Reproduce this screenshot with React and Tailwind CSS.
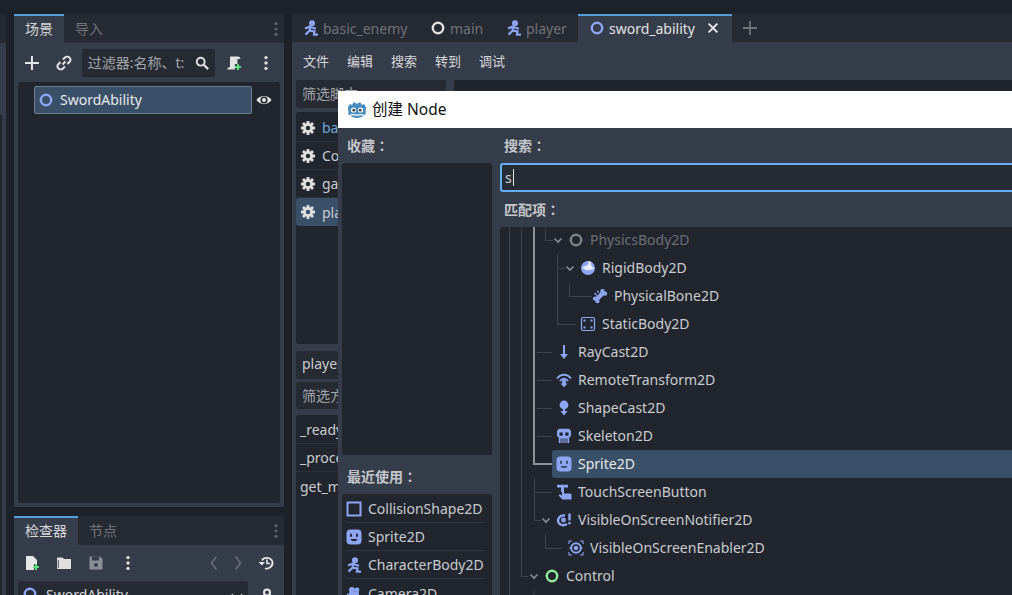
import React from "react";

const BLUE = "#8da5f3";
const Ico = ({ s = 16, className = "", children }) => (
  <svg width={s} height={s} viewBox="0 0 16 16" className={"shrink-0 " + className}>{children}</svg>
);
const Ring = ({ c = BLUE, s = 16 }) => (
  <Ico s={s}><circle cx="8" cy="8" r="5.2" fill="none" stroke={c} strokeWidth="2.4" /></Ico>
);
const Runner = ({ c = BLUE }) => (
  <Ico>
    <circle cx="9" cy="3.2" r="3" fill={c} />
    <path d="M2 8.5 7 6.4 6.6 10.6 2.5 14.6M6.8 10.6 11.5 11.4 11 14.6H15M7.2 7 13 8.8" fill="none" stroke={c} strokeWidth="2.2" />
  </Ico>
);
const Sprite = ({ cut = "#21262e" }) => (
  <Ico>
    <rect x="0.5" y="0.5" width="15" height="15" rx="4" fill={BLUE} />
    <rect x="4" y="4.5" width="2" height="3.5" rx="1" fill={cut} />
    <rect x="10" y="4.5" width="2" height="3.5" rx="1" fill={cut} />
    <path d="M4.5 10C5.5 13 10.5 13 11.5 10Z" fill={cut} />
  </Ico>
);
const Square = () => (
  <Ico><rect x="1.5" y="1.5" width="13" height="13" fill="none" stroke={BLUE} strokeWidth="2" /></Ico>
);
const Camera = () => (
  <Ico>
    <circle cx="6" cy="5" r="3" fill={BLUE} /><circle cx="11" cy="5" r="2.4" fill={BLUE} />
    <rect x="3" y="7" width="10" height="6" rx="1" fill={BLUE} /><path d="M1 8 3 9.5V11L1 12.5Z" fill={BLUE} />
  </Ico>
);
const Rigid = () => (
  <Ico>
    <circle cx="8" cy="8" r="7" fill={BLUE} />
    <path d="M7.5 1.2C9.5 2.5 8.8 4.5 6.8 5.5 5 6.5 3.5 6 1.3 8.5 3.5 8 5 8.5 5.5 10.5 7.5 9.5 11 10.5 14.9 8.5 12 7.5 10.5 5.5 11 1.8 9.8 1.3 8.8 1.1 7.5 1.2Z" fill="#e8edfd" />
  </Ico>
);
const Bone = () => (
  <Ico>
    <path d="M4.5 11.5 11 5" stroke={BLUE} strokeWidth="4.4" fill="none" />
    <circle cx="10.5" cy="3.2" r="2.2" fill={BLUE} /><circle cx="13" cy="5.6" r="2.2" fill={BLUE} />
    <circle cx="3" cy="10.6" r="2.1" fill={BLUE} /><circle cx="5.4" cy="13.2" r="2.1" fill={BLUE} />
    <path d="M2.5 5 5 7.5M5 2.5 7 5" stroke={BLUE} strokeWidth="1.2" />
  </Ico>
);
const StaticB = () => (
  <Ico>
    <rect x="1.5" y="1.5" width="13" height="13" rx="1.5" fill="none" stroke={BLUE} strokeWidth="1.2" />
    <path d="M3.5 3.5h2v2h-2zM10.5 3.5h2v2h-2zM3.5 10.5h2v2h-2zM10.5 10.5h2v2h-2z" fill={BLUE} />
  </Ico>
);
const Ray = () => (
  <Ico><path d="M8 1V12" stroke={BLUE} strokeWidth="2" /><path d="M4 10 8 15 12 10Z" fill={BLUE} /></Ico>
);
const Remote = () => (
  <Ico>
    <path d="M1 6.5C5 1.5 11 1.5 15 6.5M3.8 9C6.5 6 9.5 6 12.2 9" stroke={BLUE} strokeWidth="1.8" fill="none" />
    <circle cx="8" cy="10" r="2.2" fill={BLUE} /><path d="M4.5 11.5H11.5L8 15.2Z" fill={BLUE} />
  </Ico>
);
const Shape = () => (
  <Ico><circle cx="8" cy="5" r="4.4" fill={BLUE} /><path d="M8 8V12" stroke={BLUE} strokeWidth="2" /><path d="M4.5 11H11.5L8 15.5Z" fill={BLUE} /></Ico>
);
const Skull = ({ cut = "#21262e" }) => (
  <Ico>
    <path d="M4 0.8H12C14 0.8 15 2.5 15 4.5V7C15 8.5 14 9 13.2 9.5V15H2.8V9.5C2 9 1 8.5 1 7V4.5C1 2.5 2 0.8 4 0.8Z" fill={BLUE} />
    <rect x="3.5" y="4.5" width="3.2" height="3.2" fill={cut} /><rect x="9.3" y="4.5" width="3.2" height="3.2" fill={cut} />
    <path d="M5 10.5V15M7 10.5V15M9 10.5V15M11 10.5V15" stroke={cut} strokeWidth="0.9" />
  </Ico>
);
const Touch = () => (
  <Ico>
    <path d="M1 0.8H12V3.5H8V8H5V3.5H1Z" fill={BLUE} />
    <path d="M6 6.5 8 6.5V9.5H13.5C14.8 9.5 15.5 10 15.5 11V15.5H6.5L2.5 11.5 3.8 10.3 6 11.5Z" fill={BLUE} />
  </Ico>
);
const Notifier = () => (
  <Ico>
    <path d="M9 3.5C4 2.5 1 7 2.5 10.5 4 13.5 8 14 11 12" stroke={BLUE} strokeWidth="2.4" fill="none" />
    <circle cx="7.5" cy="8" r="2.4" fill={BLUE} />
    <path d="M13.5 1.5V8.5" stroke={BLUE} strokeWidth="2.4" /><rect x="12.3" y="10" width="2.4" height="2.4" fill={BLUE} />
  </Ico>
);
const Enabler = () => (
  <Ico>
    <path d="M1 4V1H4M12 1H15V4M15 12V15H12M4 15H1V12" stroke={BLUE} strokeWidth="1.1" fill="none" />
    <circle cx="8" cy="8" r="4.8" fill="none" stroke={BLUE} strokeWidth="2" />
    <circle cx="8" cy="8" r="2.2" fill={BLUE} />
    <path d="M1.5 8H3M13 8H14.5" stroke={BLUE} strokeWidth="1.6" />
  </Ico>
);
const Gear = ({ c = "#e0e0e0", cut = "#21262e" }) => (
  <Ico>
    <path d="M8 1V15M1 8H15M3 3 13 13M13 3 3 13" stroke={c} strokeWidth="2.8" />
    <circle cx="8" cy="8" r="5" fill={c} />
    <circle cx="8" cy="8" r="2.2" fill={cut} />
  </Ico>
);
const Kebab = ({ c = "#e0e0e0", r = 1.7 }) => (
  <Ico><circle cx="8" cy="2.6" r={r} fill={c} /><circle cx="8" cy="8" r={r} fill={c} /><circle cx="8" cy="13.4" r={r} fill={c} /></Ico>
);
const GodotLogo = () => (
  <svg width="20" height="20" viewBox="0 0 20 20" className="shrink-0">
    <path d="M1 7 3 4 5 5 7 2 9 3.5H11L13 2 15 5 17 4 19 7 18.5 14.5C15 17 13 18 10 18S5 17 1.5 14.5Z" fill="#478cbf" />
    <circle cx="6.5" cy="10" r="2.6" fill="#fff" /><circle cx="13.5" cy="10" r="2.6" fill="#fff" />
    <circle cx="6.8" cy="10.2" r="1.4" fill="#414042" /><circle cx="13.2" cy="10.2" r="1.4" fill="#414042" />
    <path d="M3 15.2C6 13.6 7.5 15.2 10 15.2S14 13.6 17 15.2" stroke="#fff" strokeWidth="1.2" fill="none" />
  </svg>
);

const Scene = () => (
  <div className="flex flex-col h-[493px] bg-[#363d4a]">
    <div className="flex h-[29px] shrink-0 bg-[#252a33] items-stretch">
      <div className="w-[50px] bg-[#363d4a] border-t-2 border-[#569eda] pb-[2px] flex items-center justify-center text-[14px] text-[#d6d8db]">场景</div>
      <div className="w-[50px] flex items-center justify-center text-[14px] text-[#70747b]">导入</div>
      <div className="flex-1" />
      <div className="flex items-center"><Kebab c="#5d626b" r={1.6} /></div>
    </div>
    <div className="flex h-[39px] shrink-0 items-center pl-[10px] pr-[10px]">
      <svg width="16" height="16" viewBox="0 0 16 16"><path d="M8 1V15M1 8H15" stroke="#e6e7e9" strokeWidth="2" /></svg>
      <svg width="16" height="16" viewBox="0 0 16 16" className="ml-[16px]"><path d="M6.5 9.5 9.5 6.5M7 4.5 9 2.5C10.5 1 13 1.5 14 3 15 4.5 14.5 6 13.5 7L11.5 9M9 11.5 7 13.5C5.5 15 3 14.5 2 13 1 11.5 1.5 10 2.5 9L4.5 7" stroke="#e0e0e0" strokeWidth="2" fill="none" /></svg>
      <div className="ml-[10px] w-[134px] h-[28px] bg-[#252a33] rounded-[3px] border-b-2 border-[#20242c] flex items-center pl-[6px] pr-[6px] pt-[2px] text-[14px] text-[#a3a6ab]">
        <span className="flex-1 overflow-hidden whitespace-nowrap">过滤器:名称、t:</span>
        <svg width="14" height="14" viewBox="0 0 16 16"><circle cx="6.5" cy="6.5" r="4.5" fill="none" stroke="#e0e0e0" strokeWidth="2.2" /><path d="M10 10 15 15" stroke="#e0e0e0" strokeWidth="2.6" /></svg>
      </div>
      <svg width="16" height="16" viewBox="0 0 16 16" className="ml-[11px]"><path d="M5 1.5H12C13.5 1.5 14.5 2.5 14.5 4H11.5V9H9V14.5H1.5C1.5 13 2.3 12 4 12V3C4 2 4.5 1.5 5 1.5Z" fill="#dfe1e3" /><path d="M12 9V15M9 12H15" stroke="#5fe080" strokeWidth="2" /></svg>
      <div className="ml-[16px]"><Kebab /></div>
    </div>
    <div className="flex-1 mx-[4px] mb-[4px] bg-[#21262e] rounded-[3px] pt-[4px] pl-[16px] pr-[4px] flex items-start gap-[4px]">
      <div className="w-[218px] h-[28px] bg-[#3a5068] border border-[#6f7e90] rounded-[2px] flex items-center pl-[3px] gap-[6px] text-[14px] text-[#e6e8ea]">
        <Ring /><span className="pb-[2px]">SwordAbility</span>
      </div>
      <div className="h-[28px] flex items-center">
        <svg width="16" height="16" viewBox="0 0 16 16"><path d="M0.5 8C4 2.5 12 2.5 15.5 8 12 13.5 4 13.5 0.5 8Z" fill="#e6e6e6" /><circle cx="8" cy="8" r="3.6" fill="#21262e" /><circle cx="8" cy="8" r="2" fill="#e6e6e6" /></svg>
      </div>
    </div>
  </div>
);

const Inspector = () => (
  <div className="flex-1 mt-[9px] flex flex-col bg-[#363d4a] overflow-hidden">
    <div className="flex h-[29px] shrink-0 bg-[#252a33] items-stretch">
      <div className="w-[64px] bg-[#363d4a] border-t-2 border-[#569eda] pb-[2px] flex items-center justify-center text-[14px] text-[#d6d8db]">检查器</div>
      <div className="w-[50px] flex items-center justify-center text-[14px] text-[#70747b]">节点</div>
      <div className="flex-1" />
      <div className="flex items-center"><Kebab c="#5d626b" r={1.6} /></div>
    </div>
    <div className="flex h-[36px] shrink-0 items-center pl-[10px] pr-[10px]">
      <svg width="16" height="16" viewBox="0 0 16 16"><path d="M2 1H9L13 5V9H10V15H2Z" fill="#e6e7e9" /><path d="M12 9V15M9 12H15" stroke="#5fe080" strokeWidth="2" /></svg>
      <svg width="16" height="16" viewBox="0 0 16 16" className="ml-[16px]"><path d="M1 2.5H6.5L8 4H15V14H2C1 14 1 13.5 1 13Z" fill="#e0e0e0" /><path d="M2.3 5V12.8" stroke="#363d4a" strokeWidth="0.9" /></svg>
      <svg width="16" height="16" viewBox="0 0 16 16" className="ml-[16px]"><path d="M1.5 1.5H12L14.5 4V14.5H1.5Z" fill="#8a8e96" /><rect x="4" y="1.5" width="7" height="4" fill="#363d4a" /><circle cx="8" cy="10" r="2" fill="#363d4a" /></svg>
      <div className="ml-[16px]"><Kebab /></div>
      <div className="flex-1" />
      <svg width="16" height="16" viewBox="0 0 16 16"><path d="M10.5 1.5 5.5 8 10.5 14.5" stroke="#686d76" strokeWidth="1.6" fill="none" /></svg>
      <svg width="16" height="16" viewBox="0 0 16 16" className="ml-[8px]"><path d="M5.5 1.5 10.5 8 5.5 14.5" stroke="#686d76" strokeWidth="1.6" fill="none" /></svg>
      <svg width="16" height="16" viewBox="0 0 16 16" className="ml-[12px]"><path d="M4 5.5C5.5 1.8 13 1.5 14.5 7 15 11 11 14.5 7 13.5" stroke="#e6e7e9" strokeWidth="1.8" fill="none" /><path d="M0.5 7H7L3.8 10.5Z" fill="#e6e7e9" /><path d="M9 4.5V8.5H12" stroke="#e6e7e9" strokeWidth="1.6" fill="none" /></svg>
    </div>
    <div className="flex flex-1 pl-[4px] pr-[8px] gap-[8px] items-start">
      <div className="w-[230px] h-[40px] bg-[#252a33] rounded-[3px] flex pt-[3px] pl-[4px] gap-[8px] text-[14px] text-[#d0d2d5]">
        <div className="pt-[2px]"><Ring /></div><span>SwordAbility</span>
        <div className="flex-1" />
        <svg width="14" height="14" viewBox="0 0 16 16" className="mt-[6px] mr-[4px]"><path d="M2 5 8 11 14 5" stroke="#d0d2d5" strokeWidth="2" fill="none" /></svg>
      </div>
      <svg width="16" height="16" viewBox="0 0 16 16" className="mt-[7px] ml-[3px]"><circle cx="8" cy="4.5" r="3" fill="none" stroke="#e6e7e9" strokeWidth="2" /><path d="M8 7V15" stroke="#e6e7e9" strokeWidth="3" /></svg>
    </div>
  </div>
);

const MainTab = ({ icon, label, active, w }) => (
  <div className={"flex items-center text-[14px] pl-[11px] " + (active ? "bg-[#363d4a] border-t-2 border-[#569eda] pb-[2px] text-[#e0e2e4]" : "text-[#6f737a]")} style={{ width: w }}>
    {icon}
    <span className="ml-[4px]">{label}</span>
    {active && (
      <svg width="14" height="14" viewBox="0 0 16 16" className="ml-[11px]"><path d="M3 3 13 13M13 3 3 13" stroke="#e6e7e9" strokeWidth="2.2" /></svg>
    )}
  </div>
);

const ListRow = ({ children, sel, color = "text-[#c9ccd1]", gear = true, last }) => (
  <div className={"h-[28px] flex items-center text-[14px] whitespace-nowrap overflow-hidden " + color + " " + (sel ? "bg-[#3a5068] rounded-[3px]" : "") + " " + (last ? "" : "border-b border-[#2c323c]")}>
    {gear && <div className="pl-[4px] pr-[6px]"><Gear cut={sel ? "#3a5068" : "#21262e"} /></div>}
    {!gear && <div className="w-[4px] shrink-0" />}
    {children}
  </div>
);

const Main = () => (
  <div className="flex-1 flex flex-col">
    <div className="flex h-[28px] shrink-0 bg-[#252a33] items-stretch">
      <MainTab icon={<Runner />} label="basic_enemy" w={127} />
      <MainTab icon={<Ring c="#e0e0e0" />} label="main" w={76} />
      <MainTab icon={<Runner />} label="player" w={83} />
      <MainTab icon={<Ring />} label="sword_ability" active w={154} />
      <div className="flex items-center pl-[10px]"><svg width="16" height="16" viewBox="0 0 16 16"><path d="M8 1V15M1 8H15" stroke="#6f737a" strokeWidth="1.8" /></svg></div>
    </div>
    <div className="flex-1 bg-[#363d4a] flex flex-col">
      <div className="flex h-[38px] shrink-0 items-center pl-[11px] pt-[1px] gap-[18px] text-[13px] text-[#d6d8db]">
        <span>文件</span><span>编辑</span><span>搜索</span><span>转到</span><span>调试</span>
      </div>
      <div className="flex flex-1 pl-[4px] gap-[8px]">
        <div className="w-[150px] flex flex-col">
          <div className="h-[28px] bg-[#252a33] rounded-[3px] flex items-center pl-[6px] pb-[2px] text-[14px] text-[#a3a6ab] shrink-0">筛选脚本</div>
          <div className="h-[232px] mt-[4px] pt-[2px] bg-[#21262e] rounded-[3px] shrink-0">
            <ListRow color="text-[#6ea6d8]">basic_enemy.gd</ListRow>
            <ListRow>Components</ListRow>
            <ListRow>game_events.gd</ListRow>
            <ListRow sel last>player.gd</ListRow>
          </div>
          <div className="h-[28px] mt-[7px] bg-[#252a33] rounded-[3px] flex items-center pl-[6px] pb-[3px] text-[14px] text-[#c9ccd1] shrink-0">player.gd</div>
          <div className="h-[27px] mt-[3px] bg-[#252a33] rounded-[3px] flex items-center pl-[6px] text-[14px] text-[#a3a6ab] shrink-0">筛选方法</div>
          <div className="flex-1 mt-[6px] pt-[1px] bg-[#21262e] rounded-t-[3px]">
            <ListRow gear={false}>_ready</ListRow>
            <ListRow gear={false}>_process</ListRow>
            <ListRow gear={false} last>get_movement_vector</ListRow>
          </div>
        </div>
        <div className="flex-1 bg-[#20242c]" />
      </div>
    </div>
  </div>
);

const Recent = ({ icon, label, last }) => (
  <div className={"h-[28px] ml-[4px] mr-[8px] flex items-center gap-[6px] text-[14px] text-[#c9ccd1] whitespace-nowrap " + (last ? "" : "border-b border-[#333944]")}>
    {icon}<span>{label}</span>
  </div>
);

const Label = ({ children, className = "" }) => (
  <div className={"shrink-0 flex text-[14px] font-bold text-[#c3c6ca] " + className}>
    {children}<span className="font-['Noto_Sans_CJK_TC',sans-serif]">：</span>
  </div>
);

const TreeRow = ({ pad, icon, label, arrow, sel, dim }) => (
  <div className={"h-[28px] flex items-center text-[14px] whitespace-nowrap " + (sel ? "bg-[#3a5068] rounded-l-[3px] text-[#e6e8ea]" : dim ? "text-[#6a6e75]" : "text-[#c9ccd1]")} style={{ marginLeft: sel ? 52 : 0, paddingLeft: sel ? pad - 52 : pad }}>
    {arrow && (
      <svg width="12" height="12" viewBox="0 0 12 12" className="-ml-[16px] mr-[4px] shrink-0"><path d="M2.5 4.5 6 8 9.5 4.5" stroke="#8a8e95" strokeWidth="1.6" fill="none" /></svg>
    )}
    {icon}
    <span className="ml-[6px] pb-[2px]">{label}</span>
  </div>
);

const Guides = () => (
  <svg width="512" height="368" className="absolute left-0 top-0 pointer-events-none" fill="none" stroke="#3e434c" strokeWidth="1">
    <path d="M9.5 0V368M21.5 0V349.5H28M45.5 0V13.5H53M57.5 27V97.5H76M69.5 55V69.5H92M57.5 41.5H65" />
    <path d="M37 125.5H52M37 153.5H52M37 181.5H52M37 209.5H52M34.5 251V293.5H41M34.5 265.5H52M45.5 307V321.5H62M34 363V368" />
    <path d="M34 0V237H52" stroke="#8d9097" strokeWidth="2" />
  </svg>
);

const Modal = () => (
  <div className="absolute left-[338px] top-[91px] w-[674px] h-[504px] flex flex-col bg-[#363d4a]">
    <div className="h-[37px] shrink-0 bg-white flex items-center pl-[9px] gap-[5px] text-[15.5px] text-[#101010]">
      <GodotLogo /><span>创建 Node</span>
    </div>
    <div className="flex-1 flex pl-[4px]">
      <div className="w-[150px] flex flex-col mr-[8px] shrink-0">
        <Label className="h-[35px] items-center pl-[5px]">收藏</Label>
        <div className="h-[292px] shrink-0 bg-[#21262e] rounded-[3px]" />
        <Label className="h-[39px] items-end pb-[7px] pl-[5px]">最近使用</Label>
        <div className="flex-1 pt-[1px] bg-[#21262e] rounded-t-[3px] overflow-hidden">
          <Recent icon={<Square />} label="CollisionShape2D" />
          <Recent icon={<Sprite />} label="Sprite2D" />
          <Recent icon={<Runner />} label="CharacterBody2D" />
          <Recent icon={<Camera />} label="Camera2D" last />
        </div>
      </div>
      <div className="flex-1 flex flex-col min-w-0">
        <Label className="h-[35px] items-center pl-[4px]">搜索</Label>
        <div className="h-[29px] shrink-0 bg-[#262c36] border-y-2 border-l-2 border-[#63b0f4] rounded-l-[3px] flex items-center pl-[3px] text-[14px] text-[#d6d8db]">
          <span>s</span><span className="w-px h-[17px] bg-[#e6e8ea] ml-[1px]" />
        </div>
        <Label className="h-[35px] items-center pl-[4px]">匹配项</Label>
        <div className="flex-1 relative bg-[#21262e] rounded-tl-[3px] overflow-hidden">
          <div className="-mt-[1px]">
            <TreeRow pad={68} arrow dim icon={<Ring c="#7f8288" />} label="PhysicsBody2D" />
            <TreeRow pad={80} arrow icon={<Rigid />} label="RigidBody2D" />
            <TreeRow pad={92} icon={<Bone />} label="PhysicalBone2D" />
            <TreeRow pad={80} icon={<StaticB />} label="StaticBody2D" />
            <TreeRow pad={56} icon={<Ray />} label="RayCast2D" />
            <TreeRow pad={56} icon={<Remote />} label="RemoteTransform2D" />
            <TreeRow pad={56} icon={<Shape />} label="ShapeCast2D" />
            <TreeRow pad={56} icon={<Skull />} label="Skeleton2D" />
            <TreeRow pad={56} sel icon={<Sprite cut="#3a5068" />} label="Sprite2D" />
            <TreeRow pad={56} icon={<Touch />} label="TouchScreenButton" />
            <TreeRow pad={56} arrow icon={<Notifier />} label="VisibleOnScreenNotifier2D" />
            <TreeRow pad={68} icon={<Enabler />} label="VisibleOnScreenEnabler2D" />
            <TreeRow pad={44} arrow icon={<Ring c="#8eef97" />} label="Control" />
          </div>
          <Guides />
        </div>
      </div>
    </div>
  </div>
);

export default function App() {
  return (
    <div className="relative w-[1012px] h-[595px] overflow-hidden bg-[#1d2129] flex pt-[14px] font-['Noto_Sans','Noto_Sans_CJK_SC',sans-serif]">
      <div className="w-[6px] shrink-0 mr-[8px] flex flex-col">
        <div className="h-[29px] bg-[#252a33] shrink-0" />
        <div className="flex-1 bg-[#363d4a] pt-[72px]">
          <div className="w-[2px] h-full bg-[#21262e]" />
        </div>
      </div>
      <div className="w-[270px] shrink-0 mr-[8px] flex flex-col">
        <Scene />
        <Inspector />
      </div>
      <Main />
      <Modal />
    </div>
  );
}
